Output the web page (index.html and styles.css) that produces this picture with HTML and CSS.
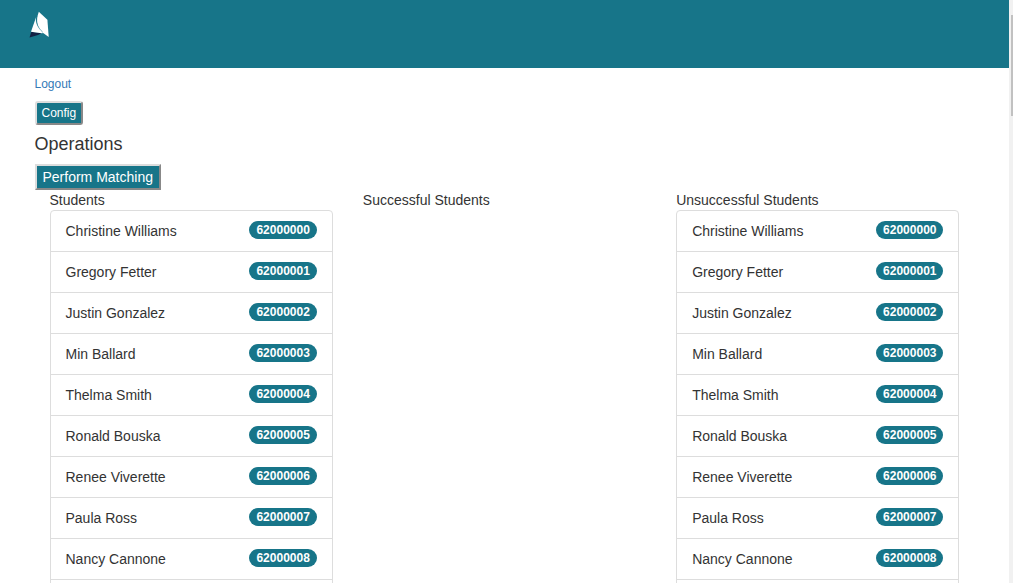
FILE: index.html
```html
<!DOCTYPE html>
<html lang="en">
<head>
<meta charset="utf-8">
<title>Operations</title>
<link rel="stylesheet" href="styles.css">
</head>
<body>
<div class="page">
  <header class="navbar">
    <svg class="logo" viewBox="0 0 20 27" aria-hidden="true">
      <path d="M2.300 20.800 12.500 22.300 9 24 0.500 26.600z" fill="#132044"/>
      <path d="M7.300 5.500 2 20.800 12.500 22.300 15 22C9 17 6 11.500 7.300 5.500z" fill="#fff"/>
      <path d="M9.800 0.800 18.400 8.800 19.700 26 13.500 21.500C8 16 6.500 9.500 9.800 0.800z" fill="#fff"/>
      <path d="M7.800 5C6.200 11 8.500 16.500 14 21.500" fill="none" stroke="#177589" stroke-width=".5"/>
    </svg>
  </header>
  <main class="content">
    <a class="logout" href="#">Logout</a>
    <button class="btn btn-small" type="button">Config</button>
    <h4 class="title">Operations</h4>
    <button class="btn" type="button">Perform Matching</button>
    <div class="columns">
      <section class="column">
        <div>Students</div>
        <ul class="list">
          <li class="item">Christine Williams <span class="badge">62000000</span></li>
          <li class="item">Gregory Fetter <span class="badge">62000001</span></li>
          <li class="item">Justin Gonzalez <span class="badge">62000002</span></li>
          <li class="item">Min Ballard <span class="badge">62000003</span></li>
          <li class="item">Thelma Smith <span class="badge">62000004</span></li>
          <li class="item">Ronald Bouska <span class="badge">62000005</span></li>
          <li class="item">Renee Viverette <span class="badge">62000006</span></li>
          <li class="item">Paula Ross <span class="badge">62000007</span></li>
          <li class="item">Nancy Cannone <span class="badge">62000008</span></li>
        </ul>
      </section>
      <section class="column">
        <div>Successful Students</div>
      </section>
      <section class="column">
        <div>Unsuccessful Students</div>
        <ul class="list">
          <li class="item">Christine Williams <span class="badge">62000000</span></li>
          <li class="item">Gregory Fetter <span class="badge">62000001</span></li>
          <li class="item">Justin Gonzalez <span class="badge">62000002</span></li>
          <li class="item">Min Ballard <span class="badge">62000003</span></li>
          <li class="item">Thelma Smith <span class="badge">62000004</span></li>
          <li class="item">Ronald Bouska <span class="badge">62000005</span></li>
          <li class="item">Renee Viverette <span class="badge">62000006</span></li>
          <li class="item">Paula Ross <span class="badge">62000007</span></li>
          <li class="item">Nancy Cannone <span class="badge">62000008</span></li>
        </ul>
      </section>
    </div>
  </main>
</div>
<div class="scroll-track" aria-hidden="true"><div class="scroll-thumb"></div></div>
</body>
</html>
```

FILE: styles.css
```css
* { box-sizing: border-box; }

body {
  display: flex;
  height: 100vh;
  margin: 0;
  overflow: hidden;
  font: 14px/20px "Liberation Sans", Arial, sans-serif;
  color: #333;
  background: #fff;
}

.page { flex: 1; min-width: 0; }

.navbar {
  height: 68px;
  padding: 11px 29px;
  background: #177589;
}

.logo { display: block; width: 20px; height: 27px; }

.content {
  display: flex;
  flex-direction: column;
  align-items: flex-start;
  max-width: 970px;
  margin: 0 auto;
  padding: 6px 15px 0;
}

.logout {
  font-size: 12px;
  color: #337ab7;
  text-decoration: none;
}

.btn {
  padding: 1px 6px;
  border: 2px solid;
  border-color: #ddd #888 #888 #ddd;
  font: inherit;
  color: #fff;
  background: #177589;
}

.btn-small {
  margin-top: 7px;
  padding: 1px 5px;
  border-radius: 3px;
  font-size: 12px;
  line-height: 18px;
}

.title {
  margin: 9px 0 10px;
  font-size: 18px;
  font-weight: 400;
}

.columns { display: flex; width: 100%; }

.column { flex: 1; padding: 0 15px; }

.list {
  margin: 0;
  padding: 0 0 20px;
  border: 1px solid #ddd;
  border-radius: 4px;
  list-style: none;
}

.item {
  display: flex;
  justify-content: space-between;
  align-items: flex-start;
  padding: 10px 15px;
  border-bottom: 1px solid #ddd;
}

.badge {
  padding: 3px 7px;
  border-radius: 10px;
  font-size: 12px;
  font-weight: 700;
  line-height: 12px;
  color: #fff;
  background: #177589;
}

.scroll-track {
  width: 4px;
  padding: 15px 0 0 2px;
  background: #f1f1f1;
}

.scroll-thumb { height: 101px; background: #c1c1c1; }
```
